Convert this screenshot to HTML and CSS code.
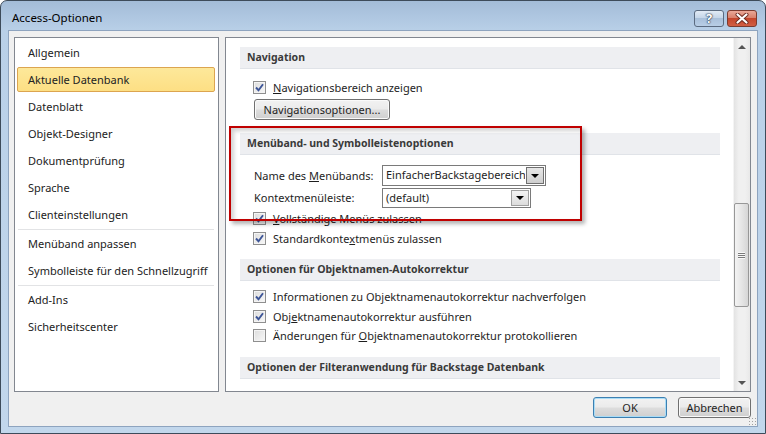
FILE: index.html
```html
<!DOCTYPE html>
<html lang="de">
<head>
  <meta charset="UTF-8">
  <title>Access-Optionen</title>
  <link rel="stylesheet" href="styles.css">
</head>
<body>
  <div class="window">

    <!-- Title bar -->
    <div class="titlebar">
      <span class="title">Access-Optionen</span>
      <div class="caption-buttons">
        <span class="cap help">?</span>
        <span class="cap close">
          <svg width="14" height="11" viewBox="0 0 14 11">
            <path d="M2.5 1.5 L11.5 9.5 M11.5 1.5 L2.5 9.5" stroke="#6b2a1f" stroke-width="4" stroke-linecap="round"/>
            <path d="M2.5 1.5 L11.5 9.5 M11.5 1.5 L2.5 9.5" stroke="#fff" stroke-width="2.2" stroke-linecap="round"/>
          </svg>
        </span>
      </div>
    </div>

    <div class="client">
      <div class="panes">

        <!-- Left category list -->
        <ul class="nav">
          <li>Allgemein</li>
          <li class="selected">Aktuelle Datenbank</li>
          <li>Datenblatt</li>
          <li>Objekt-Designer</li>
          <li>Dokumentprüfung</li>
          <li>Sprache</li>
          <li>Clienteinstellungen</li>
          <li class="sep"></li>
          <li>Menüband anpassen</li>
          <li>Symbolleiste für den Schnellzugriff</li>
          <li class="sep"></li>
          <li>Add-Ins</li>
          <li>Sicherheitscenter</li>
        </ul>

        <!-- Right options pane -->
        <div class="content">
          <div class="scroll-area">

            <div class="section-head first">Navigation</div>
            <div class="check-row nav-check">
              <span class="cb checked"><svg width="9" height="9" viewBox="0 0 9 9"><path d="M1 4.5 L3.5 7.2 L8 1.2" fill="none" stroke="#3d5597" stroke-width="1.9"/></svg></span>
              <span><u>N</u>avigationsbereich anzeigen</span>
            </div>
            <button class="btn nav-btn">Navigationsoptionen...</button>

            <div class="section-head">Menüband- und Symbolleistenoptionen</div>
            <div class="field-row first-field">
              <span class="field-label">Name des <u>M</u>enübands:</span>
              <div class="combo wide">
                <span class="combo-text">EinfacherBackstagebereich</span>
                <span class="combo-btn dark"><i class="tri"></i></span>
              </div>
            </div>
            <div class="field-row">
              <span class="field-label">Kontextmenüleiste:</span>
              <div class="combo narrow">
                <span class="combo-text">(default)</span>
                <span class="combo-btn"><i class="tri"></i></span>
              </div>
            </div>
            <div class="check-row">
              <span class="cb checked"><svg width="9" height="9" viewBox="0 0 9 9"><path d="M1 4.5 L3.5 7.2 L8 1.2" fill="none" stroke="#3d5597" stroke-width="1.9"/></svg></span>
              <span><u>V</u>ollständige Menüs zulassen</span>
            </div>
            <div class="check-row">
              <span class="cb checked"><svg width="9" height="9" viewBox="0 0 9 9"><path d="M1 4.5 L3.5 7.2 L8 1.2" fill="none" stroke="#3d5597" stroke-width="1.9"/></svg></span>
              <span>Standardkonte<u>x</u>tmenüs zulassen</span>
            </div>

            <div class="section-head third">Optionen für Objektnamen-Autokorrektur</div>
            <div class="check-row tight after-head">
              <span class="cb checked"><svg width="9" height="9" viewBox="0 0 9 9"><path d="M1 4.5 L3.5 7.2 L8 1.2" fill="none" stroke="#3d5597" stroke-width="1.9"/></svg></span>
              <span>Informationen zu Ob<u>j</u>ektnamenautokorrektur nachverfolgen</span>
            </div>
            <div class="check-row tight">
              <span class="cb checked"><svg width="9" height="9" viewBox="0 0 9 9"><path d="M1 4.5 L3.5 7.2 L8 1.2" fill="none" stroke="#3d5597" stroke-width="1.9"/></svg></span>
              <span>Obj<u>e</u>ktnamenautokorrektur ausführen</span>
            </div>
            <div class="check-row tight">
              <span class="cb"></span>
              <span>Änderungen für <u>O</u>bjektnamenautokorrektur protokollieren</span>
            </div>

            <div class="section-head last">Optionen der Filteranwendung für Backstage Datenbank</div>
          </div>

          <!-- Vertical scrollbar -->
          <div class="scrollbar">
            <div class="sb-arrow"><i class="sb-up"></i></div>
            <div class="sb-track">
              <div class="sb-thumb"><span class="grip"></span></div>
            </div>
            <div class="sb-arrow"><i class="sb-down"></i></div>
          </div>

          <!-- Red highlight frame drawn over the screenshot -->
          <div class="highlight"></div>
        </div>
      </div>

      <div class="buttons">
        <button class="btn default">OK</button>
        <button class="btn">Abbrechen</button>
      </div>
      <span class="grip-corner"></span>
    </div>
  </div>
</body>
</html>
```

FILE: styles.css
```css
/* Reset */
* {
  margin: 0;
  padding: 0;
  box-sizing: border-box;
}

body {
  width: 766px;
  height: 434px;
  overflow: hidden;
  background: #fff;
  font-family: "Segoe UI", "Noto Sans", sans-serif;
  font-size: 11px;
  color: #1e1e1e;
}

/* Window frame */
.window {
  width: 766px;
  height: 434px;
  border: 1px solid #3d4b5a;
  border-radius: 7px 7px 0 0;
  background: linear-gradient(#a3bcd8, #b9d0e8 30px, #c2d7ec);
  padding: 0 7px 6px;
  display: flex;
  flex-direction: column;
}

.titlebar {
  height: 29px;
  display: flex;
  justify-content: space-between;
  align-items: flex-start;
}

.title {
  margin: 9px 0 0 4px;
  font-size: 11.5px;
  color: #000;
}

.caption-buttons {
  display: flex;
  gap: 3px;
  margin-top: 9px;
  margin-right: 1px;
}

.cap {
  width: 30px;
  height: 17px;
  border: 1px solid #5b6b80;
  border-radius: 3px;
  display: flex;
  align-items: center;
  justify-content: center;
}

.help {
  background: linear-gradient(#e2ebf5, #c5d6e9 45%, #a9c0da 50%, #b8cee6);
  color: #fff;
  font-weight: bold;
  font-size: 13px;
  text-shadow: 0 0 1px #2d3d52, 0 0 1px #2d3d52, 0 0 2px #2d3d52;
  line-height: 15px;
}

.close {
  background: linear-gradient(#e9a898, #d9806b 45%, #c4462c 50%, #d15e43);
  border-color: #7a3b2f;
}

/* Client area */
.client {
  position: relative;
  flex: 1;
  background: #f0f0f0;
  border: 1px solid #8ea4bf;
  padding: 6px 6px 0 5px;
}

.panes {
  display: flex;
  gap: 6px;
  height: 355px;
}

/* Category list */
.nav {
  list-style: none;
  width: 205px;
  background: #fff;
  border: 1px solid #828790;
  padding-top: 1px;
  display: flex;
  flex-direction: column;
}

.nav li {
  height: 25px;
  flex: none;
  margin: 1px 3px 1px 2px;
  padding-left: 11px;
  line-height: 25px;
  color: #222;
  white-space: nowrap;
}

.nav li.selected {
  background: linear-gradient(#fde89a, #fddf84);
  border: 1px solid #dca550;
  border-radius: 2px;
  line-height: 23px;
  padding-left: 10px;
}

.nav li.sep {
  height: 1px;
  margin: 1px 4px 0 3px;
  background: #e2e3e5;
}

/* Options pane */
.content {
  position: relative;
  width: 526px;
  background: #fff;
  border: 1px solid #828790;
  display: flex;
}

.scroll-area {
  flex: 1;
  overflow: hidden;
  padding: 0 13px 0 14px;
}

.section-head {
  height: 22px;
  margin-top: 13px;
  padding-left: 7px;
  background: #eeeff2;
  border-bottom: 1px solid #e0e3e8;
  font-weight: bold;
  font-size: 10.5px;
  color: #3a3a3a;
  line-height: 21px;
}

.section-head.first {
  margin-top: 9px;
}

.section-head.third {
  margin-top: 11px;
}

.section-head.last {
  margin-top: 11px;
}

.check-row {
  height: 20px;
  padding-left: 13px;
  display: flex;
  align-items: center;
  gap: 7px;
  white-space: nowrap;
}

.check-row.tight {
  height: 19.5px;
}

.check-row.nav-check {
  margin-top: 8px;
}

.check-row.after-head {
  margin-top: 6px;
}

.cb {
  width: 13px;
  height: 13px;
  flex: none;
  border: 1px solid #8f8f8f;
  background: linear-gradient(135deg, #dcdcdc, #f8f8f8);
  box-shadow: inset 0 0 0 1px #f4f4f4;
  display: flex;
  align-items: center;
  justify-content: center;
}

.btn {
  font-family: inherit;
  font-size: 11px;
  color: #1e1e1e;
  height: 21px;
  border: 1px solid #707070;
  border-radius: 3px;
  background: linear-gradient(#f2f2f2 0%, #ebebeb 48%, #dddddd 52%, #cfcfcf 100%);
  box-shadow: inset 0 0 0 1px #fafafa;
}

.nav-btn {
  display: block;
  width: 136px;
  margin: 2px 0 0 14px;
}

.field-row {
  height: 21px;
  display: flex;
  align-items: center;
  padding-left: 14px;
  margin-top: 1px;
  white-space: nowrap;
}

.field-row.first-field {
  margin-top: 10px;
}

.field-label {
  width: 128px;
}

.combo {
  height: 20px;
  border: 1px solid #7a7a7a;
  background: #fff;
  display: flex;
  align-items: stretch;
  overflow: hidden;
}

.combo.wide {
  width: 164px;
  height: 21px;
}

.combo.narrow {
  width: 149px;
}

.combo-text {
  flex: 1;
  padding-left: 3px;
  line-height: 18px;
  overflow: hidden;
  white-space: nowrap;
}

.combo-btn {
  width: 18px;
  flex: none;
  margin: 1px;
  border: 1px solid #a0a0a0;
  background: linear-gradient(#f3f3f3, #dcdcdc);
  display: flex;
  align-items: center;
  justify-content: center;
}

.combo-btn.dark {
  border-color: #6f6f6f;
  background: linear-gradient(#e6e6e6, #cfcfcf);
}

.tri {
  width: 0;
  height: 0;
  border-left: 4px solid transparent;
  border-right: 4px solid transparent;
  border-top: 4px solid #000;
}

/* Scrollbar */
.scrollbar {
  width: 17px;
  flex: none;
  background: linear-gradient(90deg, #e3e3e3, #f0f0f0 30%, #f0f0f0 70%, #e8e8e8);
  border-left: 1px solid #f4f4f4;
  display: flex;
  flex-direction: column;
}

.sb-arrow {
  height: 17px;
  display: flex;
  align-items: center;
  justify-content: center;
}

.sb-up,
.sb-down {
  width: 0;
  height: 0;
  border-left: 4px solid transparent;
  border-right: 4px solid transparent;
}

.sb-up {
  border-bottom: 4px solid #555;
}

.sb-down {
  border-top: 4px solid #555;
}

.sb-track {
  flex: 1;
}

.sb-thumb {
  height: 104px;
  margin: 148px 1px 0 0;
  border: 1px solid #979797;
  border-radius: 2px;
  background: linear-gradient(90deg, #f3f3f3, #e6e6e6 50%, #d6d6d6);
  display: flex;
  align-items: center;
  justify-content: center;
}

.grip {
  width: 7px;
  height: 7px;
  background: repeating-linear-gradient(#f8f8f8 0 1px, #7a7a7a 1px 2px);
}

/* Red annotation frame */
.highlight {
  position: absolute;
  left: 3px;
  top: 88px;
  width: 353px;
  height: 95px;
  border: 2px solid #c00000;
  box-shadow: 3px 3px 4px rgba(0, 0, 0, 0.3), inset 3px 3px 4px rgba(0, 0, 0, 0.18);
  pointer-events: none;
}

/* Dialog buttons */
.buttons {
  display: flex;
  justify-content: flex-end;
  gap: 11px;
  margin-top: 5px;
}

.buttons .btn {
  width: 73px;
}

.buttons .btn.default {
  width: 74px;
  border-color: #3c7fb1;
  box-shadow: inset 0 0 0 1px #a9dcf6;
}

.grip-corner {
  position: absolute;
  right: 1px;
  bottom: 1px;
  width: 8px;
  height: 8px;
  background: radial-gradient(circle, #a0a0a0 0.7px, transparent 1px) 0 0 / 3px 3px;
}
```
